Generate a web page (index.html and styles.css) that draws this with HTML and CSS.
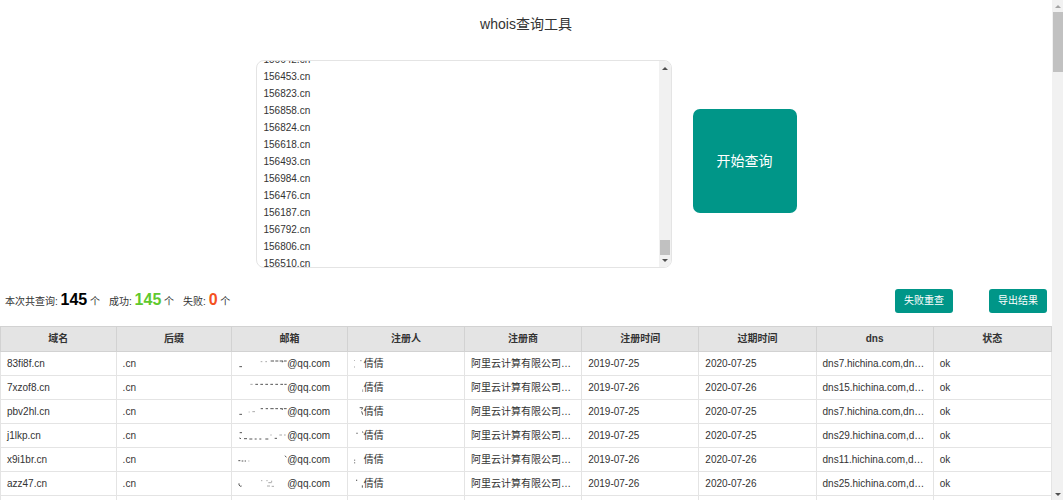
FILE: index.html
```html
<!DOCTYPE html>
<html lang="zh-CN">
<head>
<meta charset="utf-8">
<title>whois查询工具</title>
<link rel="stylesheet" href="styles.css">
</head>
<body>
<div class="page">
  <main class="main">
    <h1 class="title">whois查询工具</h1>
    <section class="query">
      <div class="domain-box">
        <textarea class="domains" id="domains" aria-label="域名列表" spellcheck="false">156642.cn
156453.cn
156823.cn
156858.cn
156824.cn
156618.cn
156493.cn
156984.cn
156476.cn
156187.cn
156792.cn
156806.cn
156510.cn</textarea>
        <div class="scrollbar scrollbar-box" aria-hidden="true">
          <svg class="arrow" viewBox="0 0 6 4"><path d="M0 4L3 1L6 4Z"/></svg>
          <span class="thumb thumb-box"></span>
          <svg class="arrow" viewBox="0 0 6 4"><path d="M0 0L3 3L6 0Z"/></svg>
        </div>
      </div>
      <button class="btn btn-start" type="button">开始查询</button>
    </section>
    <section class="toolbar">
      <p class="stats">
        <span>本次共查询: <b class="count">145</b> 个</span>
        <span>成功: <b class="count count-ok">145</b> 个</span>
        <span>失败: <b class="count count-fail">0</b> 个</span>
      </p>
      <div class="actions">
        <button class="btn btn-small" type="button">失败重查</button>
        <button class="btn btn-small" type="button">导出结果</button>
      </div>
    </section>
    <table class="results">
      <colgroup>
        <col class="col-a"><col class="col-a"><col class="col-a">
        <col class="col-b"><col class="col-b"><col class="col-b"><col class="col-b"><col class="col-b">
        <col>
      </colgroup>
      <thead>
        <tr><th>域名</th><th>后缀</th><th>邮箱</th><th>注册人</th><th>注册商</th><th>注册时间</th><th>过期时间</th><th>dns</th><th>状态</th></tr>
      </thead>
      <tbody>
        <tr>
          <td>83fi8f.cn</td><td>.cn</td>
          <td><svg class="mask mask-mail" viewBox="0 0 147 30"><path d="M4 23h8M98 6h10M112 6h9M125 6h10l-2 4M138 6h8"/><path class="faint" d="M68 8h5M82 8h5"/></svg>@qq.com</td>
          <td><svg class="mask mask-name" viewBox="0 0 30 30"><path class="faint" d="M1 3v3M1 22v4M18 5h5"/></svg>倩倩</td>
          <td>阿里云计算有限公司（万网）</td><td>2019-07-25</td><td>2020-07-25</td><td>dns7.hichina.com,dns8.hi</td><td>ok</td>
        </tr>
        <tr>
          <td>7xzof8.cn</td><td>.cn</td>
          <td><svg class="mask mask-mail" viewBox="0 0 147 30"><path d="M52 4h8M67 4h8M82 4h8M97 4h8M112 4h8M127 4h8M139 4h7"/><path class="faint" d="M37 4h7"/></svg>@qq.com</td>
          <td><svg class="mask mask-name" viewBox="0 0 30 30"><path class="faint" d="M26 19v8"/></svg>倩倩</td>
          <td>阿里云计算有限公司（万网）</td><td>2019-07-26</td><td>2020-07-26</td><td>dns15.hichina.com,dns16</td><td>ok</td>
        </tr>
        <tr>
          <td>pbv2hl.cn</td><td>.cn</td>
          <td><svg class="mask mask-mail" viewBox="0 0 147 30"><path d="M4 22h8M68 5h7M83 5h7M97 5h10M112 5h8M126 5h8l-2 4M138 5h8"/><path class="faint" d="M32 15h3M43 14h8"/></svg>@qq.com</td>
          <td><svg class="mask mask-name" viewBox="0 0 30 30"><path d="M17 2h9l-3 6M23 13l3 10"/></svg>倩倩</td>
          <td>阿里云计算有限公司（万网）</td><td>2019-07-25</td><td>2020-07-25</td><td>dns7.hichina.com,dns8.hi</td><td>ok</td>
        </tr>
        <tr>
          <td>j1lkp.cn</td><td>.cn</td>
          <td><svg class="mask mask-mail" viewBox="0 0 147 30"><path d="M5 5h7M4 21l5 2M18 23h9M34 24h9M50 24h6M64 24h6M82 24h9M110 22h7"/><path class="faint" d="M97 12h4M124 12h8M138 12h5"/></svg>@qq.com</td>
          <td><svg class="mask mask-name" viewBox="0 0 30 30"><path d="M9 5v4M24 2l4 3"/></svg>倩倩</td>
          <td>阿里云计算有限公司（万网）</td><td>2019-07-25</td><td>2020-07-25</td><td>dns29.hichina.com,dns30</td><td>ok</td>
        </tr>
        <tr>
          <td>x9i1br.cn</td><td>.cn</td>
          <td><svg class="mask mask-mail" viewBox="0 0 147 30"><path d="M1 17h6M11 18h5M20 18h4M141 2l4 5"/><path class="faint" d="M31 18h3"/></svg>@qq.com</td>
          <td><svg class="mask mask-name" viewBox="0 0 30 30"><path d="M2 14v3M2 22v3"/></svg>倩倩</td>
          <td>阿里云计算有限公司（万网）</td><td>2019-07-26</td><td>2020-07-26</td><td>dns11.hichina.com,dns12</td><td>ok</td>
        </tr>
        <tr>
          <td>azz47.cn</td><td>.cn</td>
          <td><svg class="mask mask-mail" viewBox="0 0 147 30"><path d="M3 13v5q3 6 8 3"/><path class="faint" d="M69 5h4M85 5h4M91 11h10M87 21h9M101 5v5M101 22h7"/></svg>@qq.com</td>
          <td><svg class="mask mask-name" viewBox="0 0 30 30"><path d="M8 2v4M25 19v7"/></svg>倩倩</td>
          <td>阿里云计算有限公司（万网）</td><td>2019-07-26</td><td>2020-07-26</td><td>dns25.hichina.com,dns26</td><td>ok</td>
        </tr>
        <tr><td></td><td></td><td></td><td></td><td></td><td></td><td></td><td></td><td></td></tr>
      </tbody>
    </table>
  </main>
  <div class="scrollbar scrollbar-page" aria-hidden="true">
    <svg class="arrow arrow-off" viewBox="0 0 6 4"><path d="M0 4L3 1L6 4Z"/></svg>
    <span class="thumb thumb-page"></span>
    <svg class="arrow arrow-last" viewBox="0 0 6 4"><path d="M0 0L3 3L6 0Z"/></svg>
  </div>
</div>
<script src="main.js"></script>
</body>
</html>
```

FILE: styles.css
```css
* {
  box-sizing: border-box;
}

body {
  margin: 0;
  background: #fff;
  color: #333;
  font: 10px/16px "Liberation Sans", "Noto Sans CJK SC", sans-serif;
}

.page {
  display: flex;
  height: 100vh;
}

.main {
  flex: 1;
  min-width: 0;
  overflow: hidden;
}

.title {
  margin: 0;
  padding: 14px 0 26px;
  font-size: 14px;
  line-height: 20px;
  font-weight: 400;
  text-align: center;
}

.query {
  display: flex;
  justify-content: center;
  align-items: center;
  gap: 21px;
}

.domain-box {
  display: flex;
  width: 416px;
  height: 208px;
  border: 1px solid #e4e4e4;
  border-radius: 8px;
  overflow: hidden;
}

.domains {
  flex: 1;
  min-width: 0;
  margin: 0;
  padding: 0 7px;
  border: 0;
  outline: 0;
  resize: none;
  overflow: hidden;
  background: transparent;
  color: #333;
  font: inherit;
  line-height: 17px;
}

.scrollbar {
  display: flex;
  flex-direction: column;
  align-items: center;
  background: #f1f1f1;
}

.scrollbar-box {
  width: 12px;
  padding: 5px 0 4px;
  gap: 4px;
}

.scrollbar-page {
  width: 11px;
  padding: 4px 0 3px;
  gap: 4px;
}

.thumb {
  background: #c1c1c1;
}

.thumb-box {
  width: 10px;
  height: 15px;
  margin-top: auto;
}

.thumb-page {
  width: 10px;
  height: 60px;
}

.arrow {
  width: 6px;
  height: 4px;
  flex: none;
  fill: #505050;
}

.arrow-off {
  fill: #a3a3a3;
}

.arrow-last {
  margin-top: auto;
}

.btn {
  border: 0;
  padding: 0;
  background: #009688;
  color: #fff;
  font: inherit;
  cursor: pointer;
}

.btn-start {
  width: 104px;
  height: 104px;
  margin-bottom: 6px;
  border-radius: 7px;
  font-size: 14px;
}

.btn-small {
  height: 24px;
  padding: 0 9px;
  border-radius: 3px;
}

.toolbar {
  display: flex;
  justify-content: space-between;
  align-items: center;
  padding: 21px 5px 13px;
}

.stats {
  display: flex;
  gap: 9px;
  margin: 0;
}

.count {
  color: #000;
  font-size: 16px;
}

.count-ok {
  color: #5fc92e;
}

.count-fail {
  color: #f4511e;
}

.actions {
  display: flex;
  gap: 36px;
}

.results {
  width: 100%;
  table-layout: fixed;
  border-collapse: collapse;
}

.col-a {
  width: 11%;
}

.col-b {
  width: 11.15%;
}

.results th,
.results td {
  height: 24px;
  padding: 0 6px;
  border: 1px solid #e4e4e4;
  overflow: hidden;
  text-overflow: ellipsis;
  white-space: nowrap;
  text-align: left;
}

.results th {
  height: 25px;
  background: #e4e4e4;
  border-color: #d2d2d2;
  text-align: center;
}

.mask {
  height: 10px;
  vertical-align: middle;
  fill: none;
  stroke: #555;
  stroke-width: 3;
}

.mask-mail {
  width: 49px;
}

.mask-name {
  width: 10px;
}

.mask .faint {
  stroke: #aaa;
}
```

FILE: main.js
```js
document.getElementById('domains').scrollTop = 10;
```
